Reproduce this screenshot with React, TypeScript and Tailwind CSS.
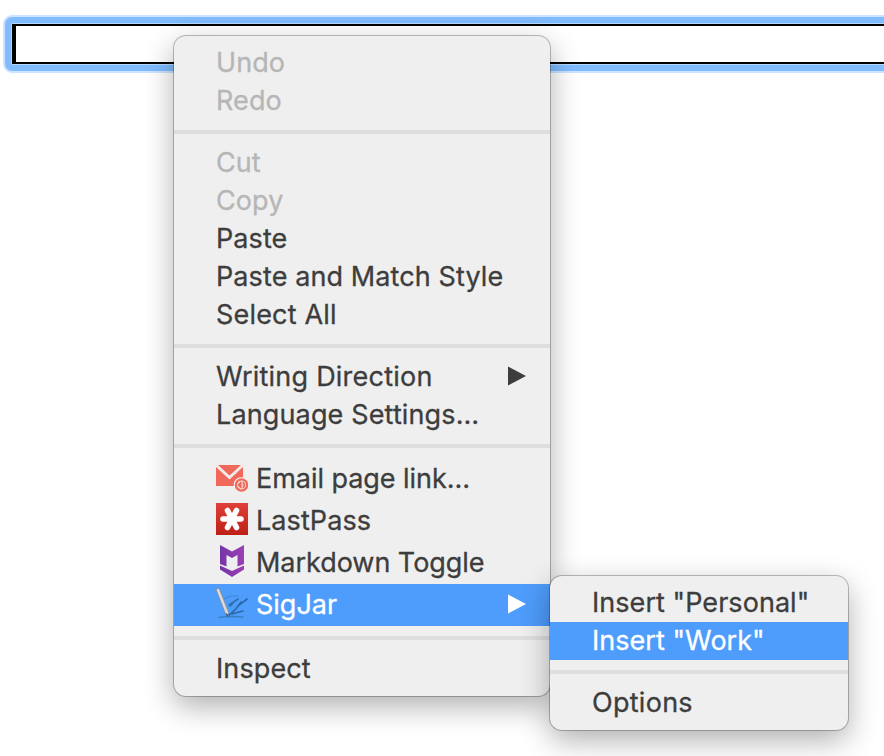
import type { ReactNode } from "react";

function Separator() {
  return <div className="my-[10px] h-1 bg-[#dedede]" />;
}

type ItemProps = {
  children: ReactNode;
  icon?: ReactNode;
  disabled?: boolean;
  active?: boolean;
  submenu?: boolean;
  tracking?: string;
};

function Item({ children, icon, disabled, active, submenu, tracking = "tracking-[0.08px]" }: ItemProps) {
  const color = active ? "bg-[#4e9cfb] text-white" : disabled ? "text-[#b6b6b6]" : "text-[#3d3d3d]";
  return (
    <div className={`flex items-center pl-[42px] pr-6 ${icon ? "h-[42px]" : "h-[38px]"} ${color}`}>
      {icon && <span className="mb-1 mr-2 h-8 w-8 shrink-0">{icon}</span>}
      <span className={`whitespace-pre leading-[38px] [-webkit-text-stroke:0.3px] ${tracking}`}>{children}</span>
      {submenu && (
        <svg className="mb-0.5 ml-auto h-5 w-[18px]" viewBox="0 0 18 20" fill="currentColor">
          <path d="M0 .5 18 10 0 19.5Z" />
        </svg>
      )}
    </div>
  );
}

function MailIcon() {
  return (
    <svg viewBox="0 0 32 32" className="h-8 w-8">
      <path d="M0 4H27V17A7 7 0 0 0 18 25H0Z" fill="#f0695a" />
      <path d="M0 4 13.5 16.5 27 4" fill="none" stroke="#f3e9e8" strokeWidth="3" />
      <path d="M3 4 13.5 13.5 24 4Z" fill="#f0695a" />
      <circle cx="25.5" cy="24" r="7.8" fill="#efefef" />
      <circle cx="25.5" cy="24" r="5.7" fill="#f8cbc5" stroke="#f0695a" strokeWidth="2.2" />
      <path d="m25 21-3 3 3 3Z" fill="#f0695a" stroke="#f0695a" strokeWidth="1" />
      <path d="M27 21q2.5 3 0 6" fill="none" stroke="#f0695a" strokeWidth="1.6" />
    </svg>
  );
}

function LastPassIcon() {
  return (
    <svg viewBox="0 0 32 32" className="h-8 w-8">
      <defs>
        <linearGradient id="red" x2="0" y2="1">
          <stop stopColor="#df4037" />
          <stop offset="1" stopColor="#bd1f15" />
        </linearGradient>
      </defs>
      <path d="M0 0H32V32H0Z" fill="url(#red)" />
      <path d="M7 16H25M11.5 7.5 20.5 24.5M20.5 7.5 11.5 24.5" stroke="#fff" strokeWidth="5.6" strokeLinecap="round" />
    </svg>
  );
}

function MarkdownIcon() {
  return (
    <svg viewBox="0 0 32 32" className="h-8 w-8">
      <defs>
        <linearGradient id="purple">
          <stop stopColor="#7437a5" />
          <stop offset="1" stopColor="#9b3eb5" />
        </linearGradient>
      </defs>
      <path d="M4 0 16 6.5 28 0V19L21.5 21.5V10L16 13 10.5 10V21.5L4 19Z M4 20.5 16 26 28 20.5V24.5L16 32 4 24.5Z" fill="url(#purple)" />
    </svg>
  );
}

function PenIcon() {
  return (
    <svg viewBox="0 0 32 32" className="h-8 w-8" fill="none" strokeLinecap="round">
      <path d="M3 30.5Q14 29 27 30" stroke="#397fc5" strokeWidth="1.5" />
      <path d="M8 12Q14 8 22 9" stroke="#438bdc" strokeWidth="1.2" />
      <path d="M13 18 22 12M14 19 17 16" stroke="#3070b5" strokeWidth="1.8" />
      <path d="M22 19 31 12M13 28Q19 24 25 15M16 27 27 24" stroke="#2a69ab" strokeWidth="1.6" />
      <path d="m2 3 9 23" stroke="#8593a3" strokeWidth="4" />
      <path d="m2 3 9 23" stroke="#dedbd7" strokeWidth="2.4" />
      <path d="m10.5 27 1 2" stroke="#535d6b" strokeWidth="1.6" />
    </svg>
  );
}

const panel =
  "absolute rounded-[12px] bg-[#efefef] py-2 shadow-[0_0_0_1px_rgba(0,0,0,0.25),0_10px_30px_rgba(0,0,0,0.32)]";

export default function App() {
  return (
    <div className="relative h-[756px] w-[884px] overflow-hidden bg-white pl-[3px] pt-[15px] font-['Inter','Liberation_Sans',sans-serif] text-[27px]">
      <div className="w-[920px] rounded-[9px] border-2 border-[#cce4ff] bg-[#80bcff] p-[6px]">
        <div className="rounded-[2px] bg-[#b5d8ff] p-px">
          <div className="h-10 border-y-2 border-l-4 border-black bg-white" />
        </div>
      </div>

      <div className={`${panel} left-[174px] top-9 w-[376px]`}>
        <Item disabled>Undo</Item>
        <Item disabled>Redo</Item>
        <Separator />
        <Item disabled>Cut</Item>
        <Item disabled>Copy</Item>
        <Item>Paste</Item>
        <Item tracking="tracking-[0.1px]">Paste and Match Style</Item>
        <Item tracking="tracking-[0.18px]">Select All</Item>
        <Separator />
        <Item submenu tracking="tracking-[0.23px]">Writing Direction</Item>
        <Item tracking="tracking-[0.14px]">Language Settings…</Item>
        <Separator />
        <Item icon={<MailIcon />} tracking="tracking-[-0.04px]">Email page link…</Item>
        <Item icon={<LastPassIcon />}>LastPass</Item>
        <Item icon={<MarkdownIcon />} tracking="tracking-[-0.04px]">Markdown Toggle</Item>
        <Item icon={<PenIcon />} active submenu tracking="tracking-normal">SigJar</Item>
        <Separator />
        <Item tracking="tracking-[0.12px]">Inspect</Item>
      </div>

      <div className={`${panel} left-[550px] top-[576px] w-[298px]`}>
        <Item tracking="tracking-[0.05px]">Insert "Personal"</Item>
        <Item active tracking="tracking-[0.04px]">Insert "Work"</Item>
        <Separator />
        <Item tracking="tracking-[0.28px]">Options</Item>
      </div>
    </div>
  );
}
